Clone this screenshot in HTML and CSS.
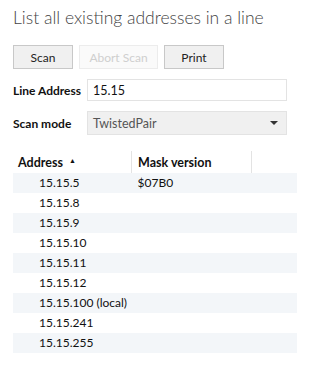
FILE: index.html
```html
<!DOCTYPE html>
<html lang="en">
<head>
  <meta charset="UTF-8" />
  <title>Line Scan</title>
  <link rel="stylesheet" href="styles.css">
</head>
<body>
  <div class="panel">
    <h1 class="title">List all existing addresses in a line</h1>

    <div class="toolbar">
      <button class="btn btn-scan">Scan</button>
      <button class="btn btn-abort" disabled>Abort Scan</button>
      <button class="btn btn-print">Print</button>
    </div>

    <div class="field">
      <label for="lineAddress">Line Address</label>
      <input type="text" id="lineAddress" value="15.15">
    </div>

    <div class="field">
      <label>Scan mode</label>
      <div class="combo">
        <span>TwistedPair</span>
        <svg class="combo-arrow" width="8" height="4" viewBox="0 0 8 4"><path d="M0 0H8L4 4Z" fill="#333"/></svg>
      </div>
    </div>

    <table class="grid">
      <thead>
        <tr>
          <th class="col-address">Address <span class="sort">&#9650;</span></th>
          <th class="col-mask">Mask version</th>
          <th class="col-rest"></th>
        </tr>
      </thead>
      <tbody>
        <tr><td>15.15.5</td><td>$07B0</td><td></td></tr>
        <tr><td>15.15.8</td><td></td><td></td></tr>
        <tr><td>15.15.9</td><td></td><td></td></tr>
        <tr><td>15.15.10</td><td></td><td></td></tr>
        <tr><td>15.15.11</td><td></td><td></td></tr>
        <tr><td>15.15.12</td><td></td><td></td></tr>
        <tr><td>15.15.100 (local)</td><td></td><td></td></tr>
        <tr><td>15.15.241</td><td></td><td></td></tr>
        <tr><td>15.15.255</td><td></td><td></td></tr>
      </tbody>
    </table>
  </div>
</body>
</html>
```

FILE: styles.css
```css
body {
  margin: 0;
  background-color: white;
  font-family: Lato, "Open Sans", sans-serif;
  font-size: 12px;
  color: #111;
}

.panel {
  padding: 6px 13px 0 13px;
}

.title {
  margin: 0;
  font-size: 17.5px;
  font-weight: 300;
  line-height: 24px;
  color: #444;
}

.toolbar {
  display: flex;
  gap: 6px;
  margin-top: 15px;
}

.btn {
  height: 24px;
  padding: 0;
  font-family: inherit;
  font-size: 12px;
  color: #222;
  background-color: #f0f0f0;
  border: 1px solid #c8c8c8;
}

.btn-scan,
.btn-print {
  width: 60px;
}

.btn-abort {
  width: 79px;
  color: #cfcfcf;
  background-color: #fafafa;
  border-color: #ececec;
}

.field {
  display: flex;
  align-items: center;
  margin-top: 10px;
}

.field:first-of-type {
  margin-top: 11px;
}

.field label {
  width: 74px;
  white-space: nowrap;
  font-weight: 700;
  color: #111;
}

.field input {
  box-sizing: border-box;
  width: 200px;
  height: 22px;
  margin: 0;
  padding: 0 5px;
  font-family: inherit;
  font-size: 12.5px;
  color: #111;
  border: 1px solid #e3e3e3;
  outline: none;
}

.combo {
  box-sizing: border-box;
  display: flex;
  align-items: center;
  justify-content: space-between;
  width: 200px;
  height: 24px;
  padding: 0 8px 0 5px;
  font-size: 12.5px;
  color: #555;
  background-color: #f0f0f0;
  border: 1px solid #e3e3e3;
}

.grid {
  width: 284px;
  margin-top: 16px;
  border-collapse: collapse;
}

.grid th {
  height: 22px;
  padding: 0 0 0 6px;
  text-align: left;
  font-size: 12.5px;
  font-weight: 700;
  border-left: 1px solid #e3e3e3;
}

.grid th.col-address {
  width: 113px;
  padding-left: 5px;
  border-left: none;
}

.grid th.col-mask {
  width: 113px;
}

.sort {
  font-size: 7px;
  vertical-align: 4px;
  margin-left: 3px;
}

.grid td {
  height: 20px;
  padding: 0 0 0 6px;
  line-height: 20px;
}

.grid td:first-child {
  padding-left: 26px;
}

.grid tbody tr:nth-child(odd) {
  background-color: #f3f6f9;
}
```
